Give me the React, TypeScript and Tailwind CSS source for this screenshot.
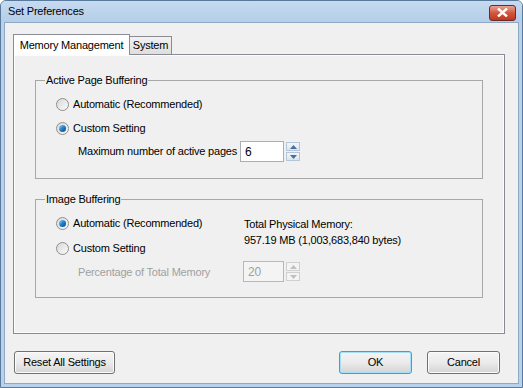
import React from 'react';

const font = { fontFamily: '"Liberation Sans", Arial, sans-serif' };

function Radio({ checked }: { checked?: boolean }) {
  return (
    <span className="w-[13px] h-[13px] rounded-full border border-[#8f8f8f] bg-gradient-to-br from-[#d8d8d8] to-[#fbfbfb] flex items-center justify-center shrink-0">
      {checked && (
        <span className="w-[7px] h-[7px] rounded-full bg-gradient-to-br from-[#8fd3f6] via-[#1f7fc4] to-[#0b4b8b]" />
      )}
    </span>
  );
}

function Spinner({ value, disabled }: { value: string; disabled?: boolean }) {
  return (
    <div className="flex items-center gap-[2px] shrink-0">
      <div
        className={`h-[21px] flex items-center pl-[4px] border text-[12px] ${
          disabled ? 'w-[41px] border-[#b8b8b8] bg-[#f4f4f4] text-[#a0a0a0]' : 'w-[44px] border-[#abadb3] bg-white text-black'
        }`}
      >
        {value}
      </div>
      <div className="flex flex-col gap-[1px]">
        {['up', 'down'].map((d) => (
          <div
            key={d}
            className={`w-[14px] h-[9px] border flex items-center justify-center ${
              disabled ? 'border-[#d0d0d0] bg-[#f4f4f4]' : 'border-[#b4c6d8] bg-gradient-to-b from-[#f2f6fa] to-[#dbe5ef]'
            }`}
          >
            <svg width="7" height="4" viewBox="0 0 7 4">
              <path
                d={d === 'up' ? 'M0 4 L3.5 0 L7 4 Z' : 'M0 0 L3.5 4 L7 0 Z'}
                fill={disabled ? '#c0c0c0' : '#4a6f9a'}
              />
            </svg>
          </div>
        ))}
      </div>
    </div>
  );
}

function Button({ label, width, primary }: { label: string; width: string; primary?: boolean }) {
  return (
    <div
      className={`${width} h-[23px] rounded-[3px] border flex items-center justify-center whitespace-nowrap bg-gradient-to-b from-[#f4f4f4] via-[#ebebeb] to-[#d4d4d4] ${
        primary ? 'border-[#3c9fd8] shadow-[inset_0_0_0_1px_#a8e0f8]' : 'border-[#707070] shadow-[inset_0_0_0_1px_#fcfcfc]'
      }`}
    >
      {label}
    </div>
  );
}

export default function App() {
  return (
    <div
      className="w-[523px] h-[388px] bg-[#b9d1ea] border border-[#5a7a9c] rounded-t-[6px] flex flex-col text-[11px] tracking-[-0.2px] text-black overflow-hidden whitespace-nowrap"
      style={font}
    >
      <div className="h-[21px] flex items-center justify-between pl-[7px] pr-[6px] bg-gradient-to-b from-[#c6dbf1] to-[#b5cde8]">
        <span className="text-black">Set Preferences</span>
        <div className="w-[27px] h-[16px] rounded-[3px] border border-[#6b2b22] bg-gradient-to-b from-[#e8a493] via-[#d2553e] to-[#c1371f] flex items-center justify-center mt-[2px]">
          <svg width="11" height="9" viewBox="0 0 11 9">
            <path d="M1 0.5 L10 8.5 M10 0.5 L1 8.5" stroke="#fff" strokeWidth="2.4" />
          </svg>
        </div>
      </div>

      <div className="flex-1 mx-[3px] mb-[3px] bg-[#f0f0f0] border border-[#8da9c7] flex flex-col px-[8px]">
        <div className="flex items-end mt-[10px] h-[21px]">
          <div className="h-[21px] w-[117px] justify-center border border-b-0 border-[#898c95] bg-white flex items-center relative z-10 mb-[-1px]">
            Memory Management
          </div>
          <div className="h-[18px] w-[42px] justify-center border border-l-0 border-b-0 border-[#898c95] bg-gradient-to-b from-[#f2f2f2] to-[#dedede] flex items-center">
            System
          </div>
        </div>

        <div className="h-[280px] w-[492px] border border-[#898c95] bg-[#fcfcfc] p-[1px]">
          <div className="h-full bg-[#f0f0f0] px-[20px] pt-[17px] flex flex-col gap-[13px]">
            <fieldset className="border border-[#a7a7a7] h-[106px] pl-[9px] pr-[9px] m-0">
              <legend className="px-[1px] leading-[14px]">Active Page Buffering</legend>
              <div className="flex flex-col pl-[11px] pt-[11px]">
                <div className="flex items-center gap-[4px] h-[13px]">
                  <Radio />
                  <span>Automatic (Recommended)</span>
                </div>
                <div className="flex items-center gap-[4px] h-[13px] mt-[11px]">
                  <Radio checked />
                  <span>Custom Setting</span>
                </div>
                <div className="flex items-center mt-[6px] pl-[22px]">
                  <span className="w-[162px] shrink-0">Maximum number of active pages</span>
                  <Spinner value="6" />
                </div>
              </div>
            </fieldset>

            <fieldset className="border border-[#a7a7a7] h-[106px] pl-[9px] pr-[9px] m-0">
              <legend className="px-[1px] leading-[14px]">Image Buffering</legend>
              <div className="flex pl-[11px] pt-[11px]">
                <div className="flex flex-col w-[188px] shrink-0">
                  <div className="flex items-center gap-[4px] h-[13px]">
                    <Radio checked />
                    <span>Automatic (Recommended)</span>
                  </div>
                  <div className="flex items-center gap-[4px] h-[13px] mt-[12px]">
                    <Radio />
                    <span>Custom Setting</span>
                  </div>
                  <div className="flex items-center mt-[11px] pl-[22px] text-[#a0a0a0] leading-[13px]">
                    <span>Percentage of Total Memory</span>
                  </div>
                </div>
                <div className="flex flex-col mt-[-1px]">
                  <span className="leading-[16px]">Total Physical Memory:</span>
                  <span className="leading-[16px]">957.19 MB (1,003,683,840 bytes)</span>
                  <div className="mt-[13px] ml-[-1px]">
                    <Spinner value="20" disabled />
                  </div>
                </div>
              </div>
            </fieldset>
          </div>
        </div>

        <div className="flex items-center mt-[17px] pl-[1px] pr-[10px]">
          <Button label="Reset All Settings" width="w-[101px]" />
          <div className="flex-1" />
          <Button label="OK" width="w-[73px]" primary />
          <div className="w-[15px]" />
          <Button label="Cancel" width="w-[73px]" />
        </div>
      </div>
    </div>
  );
}
